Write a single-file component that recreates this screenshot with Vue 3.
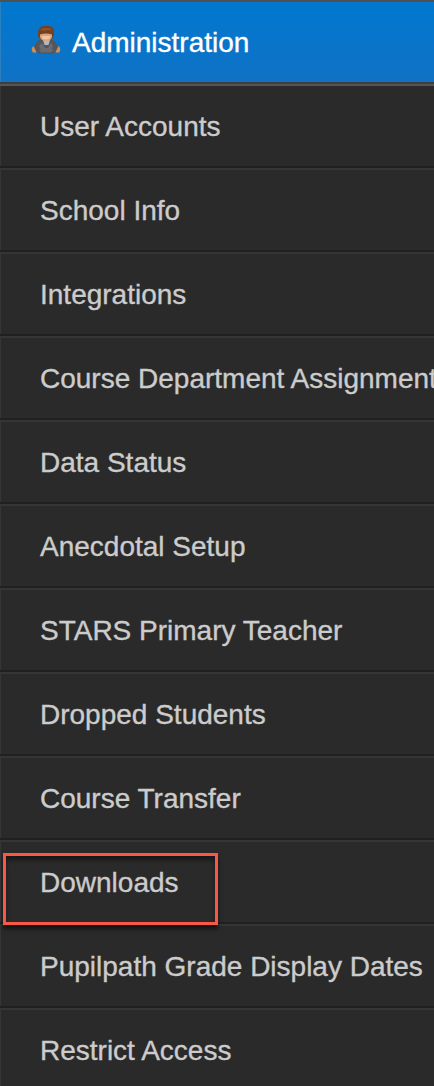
<template>
  <nav class="menu">
    <div class="menu-header">
      <svg class="icon" viewBox="0 0 32 32" aria-hidden="true">
        <ellipse cx="4.5" cy="24.5" rx="2.7" ry="3.2" fill="#cf8d58" />
        <ellipse cx="27.5" cy="24.5" rx="2.7" ry="3.2" fill="#cf8d58" />
        <path d="M4 22 Q6 16 11 14 H21 Q26 16 28 22 L26 26 Q25 29 20 29 H12 Q7 29 6 26Z" fill="#54565b" />
        <path d="M9 21 L12 18 L15 23 H18 L21 18 L23 21 L21 25 H11Z" fill="#6b6d73" />
        <path d="M13 15 H20 L18.5 20 H14.5Z" fill="#b4b6b9" />
        <path d="M9 25 L14 23.5 H19 L24 25 L21 27.5 H11Z" fill="#696b6f" />
        <path d="M8 11 V7 Q9 1 14 1 H19 Q24 2 24 7 V11 L22 14 H10Z" fill="#75401f" />
        <path d="M10 9.5 Q16 7.5 22 9.5 V12 Q21 16 16 16 Q11 16 10 12Z" fill="#d9a47c" />
        <path d="M12 11 H20 V13 Q16 16 12 13Z" fill="#efc4a0" />
        <path d="M10 5 Q13 2 18 3 Q21 3 22 6 L19 5 L14 6Z" fill="#8f5127" />
      </svg>
      <span class="label">Administration</span>
    </div>
    <ul class="menu-list">
      <li v-for="item in items" :key="item" class="menu-item">
        <span class="label">{{ item }}</span>
        <div v-if="item === 'Downloads'" class="highlight"></div>
      </li>
    </ul>
  </nav>
</template>

<script setup>
const items = [
  'User Accounts',
  'School Info',
  'Integrations',
  'Course Department Assignment',
  'Data Status',
  'Anecdotal Setup',
  'STARS Primary Teacher',
  'Dropped Students',
  'Course Transfer',
  'Downloads',
  'Pupilpath Grade Display Dates',
  'Restrict Access'
]
</script>

<style>
body {
  margin: 0;
  overflow: hidden;
  background: #2a2a2a;
}
</style>

<style scoped>
.menu {
  height: 1086px;
  overflow: hidden;
  box-sizing: border-box;
  background: #2a2a2a;
  color: #ccc;
  font-family: "Liberation Sans", Arial, sans-serif;
  font-size: 28px;
  line-height: 32px;
}
.label {
  padding-top: 2px;
  -webkit-text-stroke: 0.35px currentColor;
}
.menu-header {
  display: flex;
  align-items: center;
  box-sizing: border-box;
  height: 84px;
  padding-left: 30px;
  border-top: 2px solid #505050;
  border-bottom: 2px solid #3e3e3e;
  background: linear-gradient(#0078d0, #1072c4) padding-box;
  box-shadow: inset 1px 0 #2b80bd;
  color: #fff;
}
.icon {
  width: 32px;
  height: 32px;
  margin-top: -2px;
  margin-right: 10px;
  filter: blur(0.6px);
}
.menu-list {
  margin: 0;
  padding: 0;
  list-style: none;
}
.menu-item {
  position: relative;
  display: flex;
  align-items: center;
  box-sizing: border-box;
  height: 84px;
  padding-left: 40px;
  border-top: 2px solid #353535;
  border-bottom: 2px solid #202020;
  box-shadow: inset 1px 0 #353535;
  white-space: nowrap;
}
.menu-item:first-child {
  border-top-color: #555;
}
.highlight {
  position: absolute;
  z-index: 1;
  top: 11px;
  left: 3px;
  box-sizing: border-box;
  width: 215px;
  height: 72px;
  border: 3px solid #fa5745;
  box-shadow: 0 4px 4px rgba(0, 0, 0, 0.55), inset 0 4px 4px rgba(0, 0, 0, 0.45);
}
</style>
